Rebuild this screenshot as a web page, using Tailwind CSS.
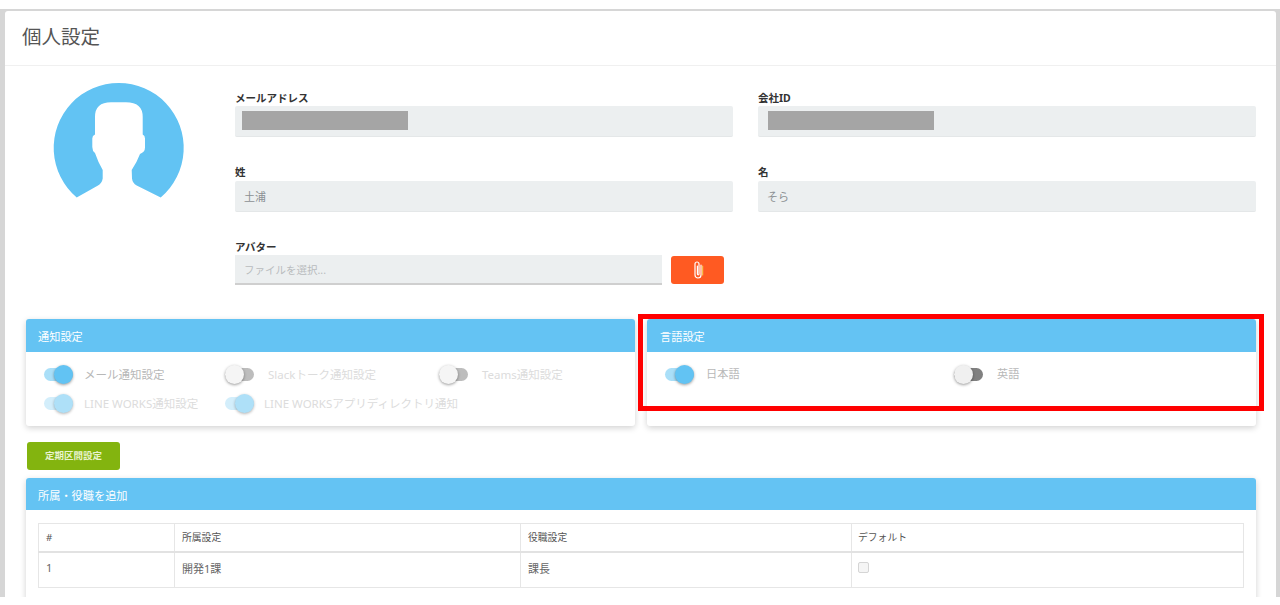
<!DOCTYPE html>
<html lang="ja">
  <head>
    <meta charset="UTF-8" />
    <title>個人設定</title>
    <script src="https://cdn.jsdelivr.net/npm/@tailwindcss/browser@4"></script>
  </head>
  <body class="bg-white font-['Noto_Sans','Noto_Sans_CJK_JP',sans-serif]">
    <div class="relative h-[605px] w-[1280px] overflow-hidden">
      <div class="mt-[9px] h-[588px] overflow-hidden bg-[#d6d6d6] pt-[2px] pl-[5px] pr-[4px]">
        <div class="h-full overflow-hidden rounded-t-[3px] bg-white">
          <!-- Title -->
          <div class="flex h-[55px] items-center border-b border-[#f0f0f0] pl-[17px] pb-[2px]">
            <h1 class="text-[19.5px] text-[#555]">個人設定</h1>
          </div>

          <!-- Profile -->
          <div class="flex pt-[16px] pl-[48px] pr-[20px]">
            <svg class="h-[116px] w-[130px] shrink-0 overflow-visible" viewBox="53 82 130 116">
              <path fill="#62c3f3" d="M76.7 197.5A65 65 0 1 1 160.7 197.5L136.7 185.5Q132.5 183 132 178.5L131.7 170Q137 162 140 154Q145 152 145 147.5V138.5Q145 135.5 142.7 134.5V117Q142.7 102.3 126 102.3H111Q95 102.3 95 117V134.5Q92.3 135.5 92.3 138.5V147Q92.3 151 95 153Q98 162 102.7 170V178.5Q102 183 98 185.5Z" />
            </svg>
            <div class="ml-[52px] grid flex-1 grid-cols-[498px_498px] gap-x-[25px] gap-y-[28px] pt-[8px]">
              <div>
                <label class="block h-[16px] text-[10.5px] leading-[16px] font-bold text-[#333]">メールアドレス</label>
                <div class="h-[31px] rounded-[2px] border-b border-[#e4e7e8] bg-[#eceff0] pt-[5px] pl-[7px]">
                  <div class="h-[19px] w-[166px] bg-[#a5a5a5]"></div>
                </div>
              </div>
              <div>
                <label class="block h-[16px] text-[10.5px] leading-[16px] font-bold text-[#333]">会社ID</label>
                <div class="h-[31px] rounded-[2px] border-b border-[#e4e7e8] bg-[#eceff0] pt-[5px] pl-[10px]">
                  <div class="h-[19px] w-[166px] bg-[#a5a5a5]"></div>
                </div>
              </div>
              <div>
                <label class="block h-[16px] text-[10.5px] leading-[14px] font-bold text-[#333]">姓</label>
                <div class="h-[31px] rounded-[2px] border-b border-[#e4e7e8] bg-[#eceff0] pl-[9px] text-[11px] leading-[31px] text-[#8b9093]">土浦</div>
              </div>
              <div>
                <label class="block h-[16px] text-[10.5px] leading-[14px] font-bold text-[#333]">名</label>
                <div class="h-[31px] rounded-[2px] border-b border-[#e4e7e8] bg-[#eceff0] pl-[9px] text-[11px] leading-[31px] text-[#8b9093]">そら</div>
              </div>
              <div class="mt-[-1px]">
                <label class="block h-[16px] text-[10.5px] leading-[16px] font-bold text-[#333]">アバター</label>
                <div class="flex items-start">
                  <div class="h-[30px] w-[427px] border-b-2 border-[#cfcfcf] bg-[#eceff0] pl-[9px] text-[10.5px] leading-[30px] text-[#b9bcbe]">ファイルを選択...</div>
                  <button class="mt-[1px] ml-[9px] flex h-[28px] w-[53px] items-center justify-center rounded-[3px] bg-[#ff5a22]">
                    <svg class="h-[20px] w-[12px]" viewBox="0 0 12 20" fill="none" stroke-linecap="round">
                      <path stroke="#f7c04a" stroke-width="1.2" d="M10.6 6v9" />
                      <path stroke="#fff" stroke-width="1.2" d="M9 5v10a3 3 0 0 1-6 0V4a2 2 0 0 1 4 0v10a.8.8 0 0 1-1.6 0V6" />
                    </svg>
                  </button>
                </div>
              </div>
            </div>
          </div>

          <!-- Notification / language cards -->
          <div class="mt-[34px] grid grid-cols-[609px_609px] gap-x-[12px] pl-[21px]">
            <section class="h-[107px] overflow-hidden rounded-[3px] bg-white shadow-[0_2px_6px_rgba(0,0,0,0.18)]">
              <h2 class="h-[33px] bg-[#64c3f3] pl-[12px] text-[11.2px] leading-[35px] text-white">通知設定</h2>
              <div class="px-[18px] pt-[13px]">
                <div class="flex h-[19px] items-center">
                  <div class="flex w-[181px] items-center">
                    <div class="relative h-[13px] w-[29px] rounded-full bg-[#aadff8]">
                      <span class="absolute top-[-3px] right-0 h-[19px] w-[19px] rounded-full bg-[#62c3f3] shadow-[0_1px_3px_rgba(0,0,0,0.4)]"></span>
                    </div>
                    <span class="ml-[11px] text-[11.5px] text-[#b8b8b8]">メール通知設定</span>
                  </div>
                  <div class="flex w-[214px] items-center">
                    <div class="relative h-[13px] w-[29px] rounded-full bg-[#bdbdbd]">
                      <span class="absolute top-[-3px] left-0 h-[19px] w-[19px] rounded-full bg-[#f5f5f5] shadow-[0_1px_3px_rgba(0,0,0,0.4)]"></span>
                    </div>
                    <span class="ml-[14px] text-[11.5px] text-[#dcdcdc]">Slackトーク通知設定</span>
                  </div>
                  <div class="flex items-center">
                    <div class="relative h-[13px] w-[29px] rounded-full bg-[#bdbdbd]">
                      <span class="absolute top-[-3px] left-0 h-[19px] w-[19px] rounded-full bg-[#f5f5f5] shadow-[0_1px_3px_rgba(0,0,0,0.4)]"></span>
                    </div>
                    <span class="ml-[14px] text-[11.5px] text-[#dcdcdc]">Teams通知設定</span>
                  </div>
                </div>
                <div class="mt-[10px] flex h-[19px] items-center">
                  <div class="flex w-[181px] items-center">
                    <div class="relative h-[13px] w-[29px] rounded-full bg-[#d3eefb]">
                      <span class="absolute top-[-3px] right-0 h-[19px] w-[19px] rounded-full bg-[#aee0f8] shadow-[0_1px_3px_rgba(0,0,0,0.3)]"></span>
                    </div>
                    <span class="ml-[11px] text-[11.5px] text-[#dcdcdc]">LINE WORKS通知設定</span>
                  </div>
                  <div class="flex items-center">
                    <div class="relative h-[13px] w-[29px] rounded-full bg-[#d3eefb]">
                      <span class="absolute top-[-3px] right-0 h-[19px] w-[19px] rounded-full bg-[#aee0f8] shadow-[0_1px_3px_rgba(0,0,0,0.3)]"></span>
                    </div>
                    <span class="ml-[10px] text-[11.5px] text-[#dcdcdc]">LINE WORKSアプリディレクトリ通知</span>
                  </div>
                </div>
              </div>
            </section>

            <section class="h-[107px] overflow-hidden rounded-[3px] bg-white shadow-[0_2px_6px_rgba(0,0,0,0.18)]">
              <h2 class="h-[33px] bg-[#64c3f3] pl-[13px] text-[11.2px] leading-[35px] text-white">言語設定</h2>
              <div class="mt-[13px] flex h-[19px] items-center px-[18px]">
                <div class="flex w-[289px] items-center">
                  <div class="relative h-[13px] w-[29px] rounded-full bg-[#aadff8]">
                    <span class="absolute top-[-3px] right-0 h-[19px] w-[19px] rounded-full bg-[#62c3f3] shadow-[0_1px_3px_rgba(0,0,0,0.4)]"></span>
                  </div>
                  <span class="ml-[12px] text-[11.2px] text-[#b8b8b8]">日本語</span>
                </div>
                <div class="flex items-center">
                  <div class="relative h-[13px] w-[29px] rounded-full bg-[#808080]">
                    <span class="absolute top-[-3px] left-0 h-[19px] w-[19px] rounded-full bg-[#f0f0f0] shadow-[0_1px_3px_rgba(0,0,0,0.4)]"></span>
                  </div>
                  <span class="ml-[14px] text-[11.2px] text-[#b8b8b8]">英語</span>
                </div>
              </div>
            </section>
          </div>

          <!-- Commuter button -->
          <button class="mt-[16px] ml-[22px] block h-[28px] w-[93px] rounded-[3px] bg-[#83b40f] text-[9.5px] font-bold text-[#e9f3cf]">定期区間設定</button>

          <!-- Department table -->
          <section class="mt-[8px] ml-[21px] w-[1230px] rounded-t-[3px] bg-white pb-[20px] shadow-[0_2px_6px_rgba(0,0,0,0.18)]">
            <h2 class="h-[32px] rounded-t-[3px] bg-[#64c3f3] pl-[12px] text-[11.2px] leading-[35px] text-white">所属・役職を追加</h2>
            <div class="px-[12px] pt-[13px]">
              <table class="w-[1205px] table-fixed border-collapse text-left">
                <thead>
                  <tr class="h-[28px] border-b-2 border-[#e2e2e2] text-[9.8px] text-[#555]">
                    <th class="w-[136px] border border-[#e6e6e6] pt-[2px] pl-[7px] font-normal">#</th>
                    <th class="w-[346px] border border-[#e6e6e6] pt-[2px] pl-[7px] font-normal">所属設定</th>
                    <th class="w-[331px] border border-[#e6e6e6] pt-[2px] pl-[7px] font-normal">役職設定</th>
                    <th class="w-[392px] border border-[#e6e6e6] pt-[2px] pl-[6px] font-normal">デフォルト</th>
                  </tr>
                </thead>
                <tbody>
                  <tr class="h-[36px] text-[11px] text-[#666]">
                    <td class="border border-[#e6e6e6] pb-[3px] pl-[7px]">1</td>
                    <td class="border border-[#e6e6e6] pb-[2px] pl-[7px]">開発1課</td>
                    <td class="border border-[#e6e6e6] pb-[2px] pl-[7px]">課長</td>
                    <td class="border border-[#e6e6e6] pb-[4px] pl-[6px]">
                      <input type="checkbox" disabled class="block h-[11px] w-[11px] appearance-none rounded-[2px] border border-[#d5d5d5] bg-[#f5f5f5]" />
                    </td>
                  </tr>
                </tbody>
              </table>
            </div>
          </section>
        </div>
      </div>

      <!-- Red highlight around the language card -->
      <div class="pointer-events-none absolute top-[314px] left-[638px] h-[97px] w-[626px] border-[5px] border-[#ff0000]"></div>
    </div>
  </body>
</html>
